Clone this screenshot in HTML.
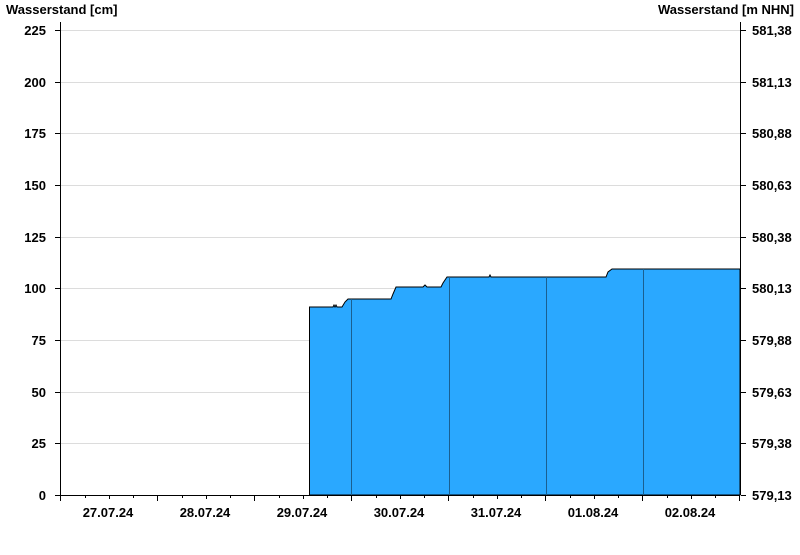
<!DOCTYPE html>
<html><head><style>
body{margin:0;background:#fff;}
svg text{font-family:"Liberation Sans",Arial,sans-serif;font-weight:bold;font-size:13px;fill:#000;}
</style></head><body>
<svg width="800" height="550" xmlns="http://www.w3.org/2000/svg">
<text x="6" y="14">Wasserstand [cm]</text>
<text x="794" y="14" text-anchor="end">Wasserstand [m NHN]</text>
<g stroke="#dcdcdc" stroke-width="1">
<line x1="61" x2="740" y1="30.5" y2="30.5"/><line x1="61" x2="740" y1="82.5" y2="82.5"/>
<line x1="61" x2="740" y1="133.5" y2="133.5"/><line x1="61" x2="740" y1="185.5" y2="185.5"/>
<line x1="61" x2="740" y1="237.5" y2="237.5"/><line x1="61" x2="740" y1="288.5" y2="288.5"/>
<line x1="61" x2="740" y1="340.5" y2="340.5"/><line x1="61" x2="740" y1="392.5" y2="392.5"/>
<line x1="61" x2="740" y1="443.5" y2="443.5"/>
</g>
<path d="M309.5 495 L309.5 307 L333 307 L334 305 L335 307 L336 305 L337 307 L342 307 L345 302 L348 299 L391 299 L393 294 L396 287 L423 287 L425 285 L427 287 L441 287 L443 283 L447 277 L489 277 L490 275 L491 277 L606 277 L608 272 L612 269 L740 269 L740 495 Z" fill="#2aa8ff" stroke="#000" stroke-width="1"/>
<g stroke="#1a5f90" stroke-width="1">
<line x1="351.5" x2="351.5" y1="299" y2="495"/><line x1="449.5" x2="449.5" y1="277" y2="495"/>
<line x1="546.5" x2="546.5" y1="277" y2="495"/><line x1="643.5" x2="643.5" y1="269" y2="495"/>
</g>
<g stroke="#000" stroke-width="1">
<line x1="60.5" x2="60.5" y1="22" y2="501"/>
<line x1="740.5" x2="740.5" y1="22" y2="495"/>
<line x1="55" x2="740" y1="495.5" y2="495.5"/>
<path d="M55 30.5h5M55 82.5h5M55 133.5h5M55 185.5h5M55 237.5h5M55 288.5h5M55 340.5h5M55 392.5h5M55 443.5h5"/>
<path d="M741 30.5h5M741 82.5h5M741 133.5h5M741 185.5h5M741 237.5h5M741 288.5h5M741 340.5h5M741 392.5h5M741 443.5h5M741 495.5h5"/>
<path d="M157.5 495v6M254.5 495v6M351.5 495v6M448.5 495v6M545.5 495v6M642.5 495v6M739.5 495v6"/>
<path d="M109.5 495v4M206.5 495v4M303.5 495v4M400.5 495v4M497.5 495v4M594.5 495v4M691.5 495v4"/>
<path d="M85.5 495v3M133.5 495v3M182.5 495v3M230.5 495v3M279.5 495v3M327.5 495v3M376.5 495v3M424.5 495v3M473.5 495v3M521.5 495v3M570.5 495v3M618.5 495v3M667.5 495v3M715.5 495v3"/>
</g>
<g text-anchor="end">
<text x="46" y="35">225</text><text x="46" y="87">200</text><text x="46" y="138">175</text>
<text x="46" y="190">150</text><text x="46" y="242">125</text><text x="46" y="293">100</text>
<text x="46" y="345">75</text><text x="46" y="397">50</text><text x="46" y="448">25</text>
<text x="46" y="500">0</text>
</g>
<g>
<text x="752" y="35">581,38</text><text x="752" y="87">581,13</text><text x="752" y="138">580,88</text>
<text x="752" y="190">580,63</text><text x="752" y="242">580,38</text><text x="752" y="293">580,13</text>
<text x="752" y="345">579,88</text><text x="752" y="397">579,63</text><text x="752" y="448">579,38</text>
<text x="752" y="500">579,13</text>
</g>
<g text-anchor="middle">
<text x="108" y="517">27.07.24</text><text x="205" y="517">28.07.24</text><text x="302" y="517">29.07.24</text>
<text x="399" y="517">30.07.24</text><text x="496" y="517">31.07.24</text><text x="593" y="517">01.08.24</text>
<text x="690" y="517">02.08.24</text>
</g>
</svg>
</body></html>
